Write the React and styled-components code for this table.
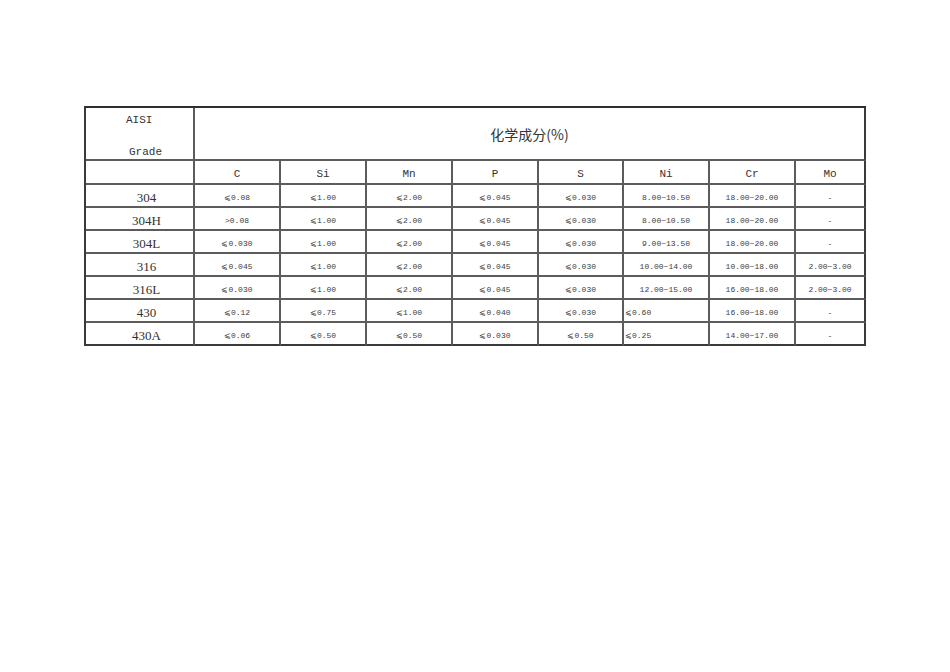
import React from "react";
import styled, { createGlobalStyle } from "styled-components";

const Global = createGlobalStyle`
  html, body { margin: 0; padding: 0; background: #fff; }
  body { font-family: "Liberation Serif", "Noto Sans CJK SC", serif; color: #222; }
`;

const Page = styled.div`
  width: 950px;
  height: 672px;
  padding: 106px 0 0 84px;
  box-sizing: border-box;
`;

const Grid = styled.div`
  display: grid;
  grid-template-columns: 109px 86px 86px 86px 86px 85px 86px 86px 70px;
  grid-template-rows: 53px 24px repeat(7, 23px);
  width: max-content;
  border-top: 2px solid #2e2e2e;
  border-left: 2px solid #3a3a3a;
`;

const Cell = styled.div`
  box-sizing: border-box;
  border-right: 2px solid ${(p) => (p.$last ? "#3a3a3a" : "#5c5c5c")};
  border-bottom: 2px solid ${(p) => (p.$bottom ? "#3a3a3a" : "#5c5c5c")};
  display: flex;
  align-items: center;
  justify-content: ${(p) => (p.$left ? "flex-start" : "center")};
  padding-left: ${(p) => (p.$left ? "1px" : "0")};
  padding-top: 4px;
  overflow: hidden;
  white-space: pre;
`;

const GradeHead = styled(Cell)`
  flex-direction: column;
  align-items: flex-start;
  justify-content: space-between;
  padding: 5px 0 0 40px;
  font-family: "Liberation Mono", monospace;
  font-size: 11px;
  color: #333;
  line-height: 14px;
`;

const GradeLabel = styled.span`
  margin-left: ${(p) => p.$shift || 0}px;
`;

const TitleCell = styled(Cell)`
  grid-column: 2 / -1;
  font-family: "Noto Sans CJK SC", sans-serif;
  font-size: 14px;
  color: #333;
  padding-top: 1px;
`;

const ColHead = styled(Cell)`
  font-family: "Liberation Mono", monospace;
  font-size: 11px;
  color: #333;
`;

const GradeCell = styled(Cell)`
  font-family: "Liberation Serif", serif;
  font-size: 13px;
  color: #333;
  padding-left: 14px;
`;

const ValueCell = styled(Cell)`
  font-family: "Liberation Mono", "DejaVu Sans Mono", monospace;
  font-size: 8px;
  color: #3c3c3c;
`;

const heads = ["C", "Si", "Mn", "P", "S", "Ni", "Cr", "Mo"];

const rows = [
  ["304", "⩽0.08", "⩽1.00", "⩽2.00", "⩽0.045", "⩽0.030", "8.00~10.50", "18.00~20.00", "-"],
  ["304H", ">0.08", "⩽1.00", "⩽2.00", "⩽0.045", "⩽0.030", "8.00~10.50", "18.00~20.00", "-"],
  ["304L", "⩽0.030", "⩽1.00", "⩽2.00", "⩽0.045", "⩽0.030", "9.00~13.50", "18.00~20.00", "-"],
  ["316", "⩽0.045", "⩽1.00", "⩽2.00", "⩽0.045", "⩽0.030", "10.00~14.00", "10.00~18.00", "2.00~3.00"],
  ["316L", "⩽0.030", "⩽1.00", "⩽2.00", "⩽0.045", "⩽0.030", "12.00~15.00", "16.00~18.00", "2.00~3.00"],
  ["430", "⩽0.12", "⩽0.75", "⩽1.00", "⩽0.040", "⩽0.030", "⩽0.60", "16.00~18.00", "-"],
  ["430A", "⩽0.06", "⩽0.50", "⩽0.50", "⩽0.030", "⩽0.50", "⩽0.25", "14.00~17.00", "-"],
];

export default function App() {
  return (
    <>
      <Global />
      <Page>
        <Grid>
          <GradeHead>
            <GradeLabel>AISI</GradeLabel>
            <GradeLabel $shift={3}>Grade</GradeLabel>
          </GradeHead>
          <TitleCell $last>化学成分(%)</TitleCell>
          <ColHead />
          {heads.map((h, i) => (
            <ColHead key={h} $last={i === heads.length - 1}>
              {h}
            </ColHead>
          ))}
          {rows.map((r, ri) => {
            const bottom = ri === rows.length - 1;
            return (
              <React.Fragment key={r[0]}>
                <GradeCell $bottom={bottom}>{r[0]}</GradeCell>
                {r.slice(1).map((v, ci) => (
                  <ValueCell
                    key={ci}
                    $bottom={bottom}
                    $last={ci === 7}
                    $left={ci === 5 && ri >= 5}
                  >
                    {v}
                  </ValueCell>
                ))}
              </React.Fragment>
            );
          })}
        </Grid>
      </Page>
    </>
  );
}
